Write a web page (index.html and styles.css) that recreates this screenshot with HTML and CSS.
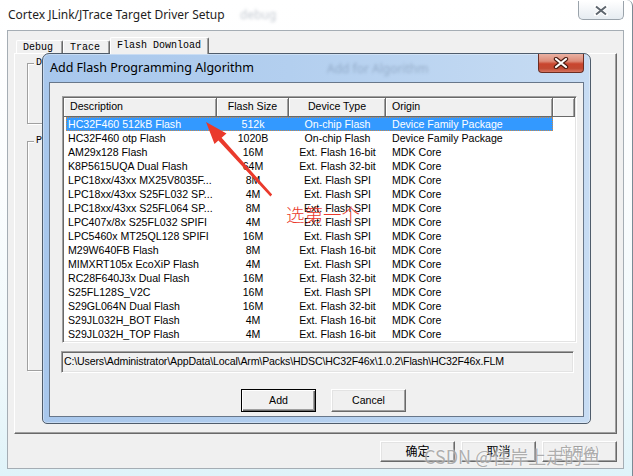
FILE: index.html
```html
<!DOCTYPE html>
<html>
<head>
<meta charset="utf-8">
<title>Cortex JLink/JTrace Target Driver Setup</title>
<link rel="stylesheet" href="styles.css">
</head>
<body>
<div class="win">
  <div class="titlebar">
    <span class="title">Cortex JLink/JTrace Target Driver Setup</span>
    <span class="ghost ghost-outer">debug</span>
    <div class="close">
      <svg width="14" height="11" viewBox="0 0 14 11"><path d="M2 1.5 L12 9.5 M12 1.5 L2 9.5" stroke="#ffffff" stroke-width="4" stroke-linecap="round"/><path d="M2 1.5 L12 9.5 M12 1.5 L2 9.5" stroke="#5d656d" stroke-width="2"/></svg>
    </div>
  </div>
  <div class="client">
    <div class="tabs">
      <div class="tab">Debug</div>
      <div class="tab">Trace</div>
      <div class="tab sel">Flash Download</div>
    </div>
    <div class="page">
      <div class="grp g1"><span class="legend">Download Function</span></div>
      <div class="grp g2"><span class="legend">Programming Algorithm</span></div>
    </div>
    <div class="footer">
      <div class="btn">确定</div>
      <div class="btn">取消</div>
      <div class="btn dis">应用(A)</div>
    </div>
  </div>
</div>

<div class="dlg">
  <div class="dlg-title">
    <span class="dtitle">Add Flash Programming Algorithm</span>
    <span class="ghost ghost-dlg">Add for Algorithm</span>
    <div class="dclose">
      <svg width="16" height="12" viewBox="0 0 16 12"><path d="M3 2 L13 10 M13 2 L3 10" stroke="#4a1b12" stroke-width="4.4" stroke-linecap="round"/><path d="M3 2 L13 10 M13 2 L3 10" stroke="#ffffff" stroke-width="2.2" stroke-linecap="round"/></svg>
    </div>
  </div>
  <div class="dlg-client">
    <div class="list">
      <div class="hdr">
        <div class="h c-desc">Description</div>
        <div class="h c-size">Flash Size</div>
        <div class="h c-dev">Device Type</div>
        <div class="h c-org">Origin</div>
        <div class="h c-fill"></div>
      </div>
      <div class="rows">
        <div class="row sel"><span class="c-desc">HC32F460 512kB Flash</span><span class="c-size">512k</span><span class="c-dev">On-chip Flash</span><span class="c-org">Device Family Package</span></div>
        <div class="row"><span class="c-desc">HC32F460 otp Flash</span><span class="c-size">1020B</span><span class="c-dev">On-chip Flash</span><span class="c-org">Device Family Package</span></div>
        <div class="row"><span class="c-desc">AM29x128 Flash</span><span class="c-size">16M</span><span class="c-dev">Ext. Flash 16-bit</span><span class="c-org">MDK Core</span></div>
        <div class="row"><span class="c-desc">K8P5615UQA Dual Flash</span><span class="c-size">64M</span><span class="c-dev">Ext. Flash 32-bit</span><span class="c-org">MDK Core</span></div>
        <div class="row"><span class="c-desc">LPC18xx/43xx MX25V8035F...</span><span class="c-size">8M</span><span class="c-dev">Ext. Flash SPI</span><span class="c-org">MDK Core</span></div>
        <div class="row"><span class="c-desc">LPC18xx/43xx S25FL032 SP...</span><span class="c-size">4M</span><span class="c-dev">Ext. Flash SPI</span><span class="c-org">MDK Core</span></div>
        <div class="row"><span class="c-desc">LPC18xx/43xx S25FL064 SP...</span><span class="c-size">8M</span><span class="c-dev">Ext. Flash SPI</span><span class="c-org">MDK Core</span></div>
        <div class="row"><span class="c-desc">LPC407x/8x S25FL032 SPIFI</span><span class="c-size">4M</span><span class="c-dev">Ext. Flash SPI</span><span class="c-org">MDK Core</span></div>
        <div class="row"><span class="c-desc">LPC5460x MT25QL128 SPIFI</span><span class="c-size">16M</span><span class="c-dev">Ext. Flash SPI</span><span class="c-org">MDK Core</span></div>
        <div class="row"><span class="c-desc">M29W640FB Flash</span><span class="c-size">8M</span><span class="c-dev">Ext. Flash 16-bit</span><span class="c-org">MDK Core</span></div>
        <div class="row"><span class="c-desc">MIMXRT105x EcoXiP Flash</span><span class="c-size">4M</span><span class="c-dev">Ext. Flash SPI</span><span class="c-org">MDK Core</span></div>
        <div class="row"><span class="c-desc">RC28F640J3x Dual Flash</span><span class="c-size">16M</span><span class="c-dev">Ext. Flash 32-bit</span><span class="c-org">MDK Core</span></div>
        <div class="row"><span class="c-desc">S25FL128S_V2C</span><span class="c-size">16M</span><span class="c-dev">Ext. Flash SPI</span><span class="c-org">MDK Core</span></div>
        <div class="row"><span class="c-desc">S29GL064N Dual Flash</span><span class="c-size">16M</span><span class="c-dev">Ext. Flash 32-bit</span><span class="c-org">MDK Core</span></div>
        <div class="row"><span class="c-desc">S29JL032H_BOT Flash</span><span class="c-size">4M</span><span class="c-dev">Ext. Flash 16-bit</span><span class="c-org">MDK Core</span></div>
        <div class="row"><span class="c-desc">S29JL032H_TOP Flash</span><span class="c-size">4M</span><span class="c-dev">Ext. Flash 16-bit</span><span class="c-org">MDK Core</span></div>
      </div>
    </div>
    <div class="path">C:\Users\Administrator\AppData\Local\Arm\Packs\HDSC\HC32F46x\1.0.2\Flash\HC32F46x.FLM</div>
    <div class="dbtns">
      <div class="btn def">Add</div>
      <div class="btn">Cancel</div>
    </div>
  </div>
</div>

<svg class="arrow" width="633" height="476" viewBox="0 0 633 476">
  <polygon points="206,122 226.5,133.5 221.6,137.8 272.2,194.6 270.4,196.4 218.4,140.6 214.5,144" fill="#ea3a2c"/>
</svg>
<div class="note">选第一个</div>
<div class="wm">CSDN @住岸上走的鱼</div>
</body>
</html>
```

FILE: styles.css
```css
* { box-sizing: border-box; }

html, body {
  margin: 0;
  padding: 0;
}

body {
  width: 633px;
  height: 476px;
  overflow: hidden;
  position: relative;
  font-family: "Liberation Sans", Arial, sans-serif;
  font-size: 10.6px;
  color: #000;
  background: #ffffff;
}

/* ---------- outer window ---------- */
.win {
  height: 476px;
  display: flex;
  flex-direction: column;
  padding: 0 8px 7px 7px;
  background: linear-gradient(to bottom, #ffffff 0%, #fbfdfe 40%, #eef8fb 80%, #dff3f9 100%);
  border-right: 1px solid #7b8a94;
  border-top-right-radius: 6px;
}

.titlebar {
  height: 30px;
  flex: none;
  display: flex;
  align-items: flex-start;
  position: relative;
}

.title {
  font-family: "Noto Sans", "Open Sans", sans-serif;
  font-size: 12px;
  color: #1e1e1e;
  margin-left: 1px;
  margin-top: 6px;
  line-height: 18px;
}

.ghost {
  position: absolute;
  color: rgba(40, 60, 90, 0.28);
  filter: blur(1.4px);
  font-family: "Noto Sans", sans-serif;
  font-size: 12px;
}

.ghost-outer {
  left: 233px;
  top: 6px;
}

.close {
  margin-left: auto;
  margin-top: 1px;
  width: 46px;
  height: 19px;
  border: 1px solid #9aa3ab;
  border-top: none;
  border-radius: 0 0 5px 5px;
  background: linear-gradient(to bottom, #ffffff, #f1f4f7 55%, #e6ecf1);
  display: flex;
  align-items: center;
  justify-content: center;
}

.client {
  flex: 1;
  display: flex;
  flex-direction: column;
  background: #f0f0f0;
  border: 1px solid #a5adb4;
  font-family: "Liberation Mono", monospace;
}

/* ---------- tabs ---------- */
.tabs {
  height: 22px;
  flex: none;
  display: flex;
  align-items: flex-end;
  padding-left: 8px;
}

.tab {
  height: 13px;
  padding: 0 6px;
  font-size: 10px;
  line-height: 14px;
  border-top: 1px solid #ffffff;
  border-left: 1px solid #ffffff;
  border-right: 1px solid #696969;
  border-radius: 2px 2px 0 0;
  box-shadow: inset -1px 0 0 #a0a0a0;
  background: #f0f0f0;
  width: 47px;
}

.tab.sel {
  width: 99px;
  height: 17px;
  margin-bottom: -1px;
  position: relative;
  z-index: 1;
  line-height: 15px;
}

.page {
  height: 381px;
  flex: none;
  margin: 0 6px;
  border-top: 1px solid #ffffff;
  border-left: 1px solid #ffffff;
  border-right: 1px solid #696969;
  border-bottom: 1px solid #696969;
  box-shadow: inset -1px -1px 0 #a0a0a0;
  padding: 9px 0 0 12px;
  display: flex;
  flex-direction: column;
}

.grp {
  width: 540px;
  border: 1px solid #a0a0a0;
  box-shadow: 1px 1px 0 #ffffff, inset 1px 1px 0 #ffffff;
  position: relative;
}

.g1 { height: 61px; }
.g2 { height: 230px; margin-top: 17px; }

.legend {
  position: absolute;
  left: 6px;
  top: -7px;
  padding: 0 2px;
  background: #f0f0f0;
  font-size: 10px;
  line-height: 12px;
}

.footer {
  margin-top: 7px;
  height: 21px;
  display: flex;
  justify-content: flex-end;
  gap: 6px;
  padding-right: 6px;
}

/* ---------- buttons ---------- */
.btn {
  width: 75px;
  height: 21px;
  background: #f0f0f0;
  border: 1px solid;
  border-color: #ffffff #696969 #696969 #ffffff;
  box-shadow: inset -1px -1px 0 #a0a0a0, inset 1px 1px 0 #e3e3e3;
  font-family: "Noto Sans CJK SC", "Liberation Sans", sans-serif;
  font-size: 12px;
  line-height: 18px;
  text-align: center;
  color: #000;
}

.btn.dis {
  color: #a0a0a0;
  text-shadow: 1px 1px 0 #ffffff;
}

/* ---------- dialog ---------- */
.dlg {
  position: absolute;
  left: 42px;
  top: 53px;
  width: 549px;
  height: 371px;
  border: 1px solid #4f5c6b;
  border-radius: 7px 7px 5px 5px;
  background: linear-gradient(to right, #a8c7ec 0%, #b3cfef 45%, #c7dcf3 100%);
  box-shadow: inset 0 0 0 1px rgba(255, 255, 255, 0.35);
  padding: 0 6px 6px 6px;
  display: flex;
  flex-direction: column;
}

.dlg-title {
  height: 28px;
  flex: none;
  display: flex;
  align-items: flex-start;
  position: relative;
}

.dtitle {
  font-family: "Noto Sans", "Open Sans", sans-serif;
  font-size: 12.5px;
  line-height: 18px;
  margin-top: 5px;
  margin-left: 1px;
  color: #000;
}

.ghost-dlg {
  left: 278px;
  top: 6px;
  color: rgba(30, 50, 80, 0.25);
}

.dclose {
  margin-left: auto;
  width: 46px;
  height: 19px;
  border: 1px solid #6b2d22;
  border-top: none;
  border-radius: 0 0 4px 4px;
  background: linear-gradient(to bottom, #e9b1a3 0%, #dd8b78 40%, #c9452e 55%, #c24a33 80%, #d77560 100%);
  display: flex;
  align-items: center;
  justify-content: center;
}

.dlg-client {
  flex: 1;
  background: #f0f0f0;
  border: 1px solid #68778a;
  display: flex;
  flex-direction: column;
}

/* list view */
.list {
  margin: 13px 6px 0 12px;
  height: 247px;
  flex: none;
  background: #ffffff;
  border: 1px solid;
  border-color: #a0a0a0 #ffffff #ffffff #a0a0a0;
  box-shadow: inset 1px 1px 0 #696969, inset -1px -1px 0 #e3e3e3;
  padding: 1px 1px 1px 1px;
  display: flex;
  flex-direction: column;
}

.hdr {
  height: 19px;
  flex: none;
  display: flex;
  background: #f0f0f0;
  border-bottom: 1px solid #696969;
}

.h {
  height: 18px;
  line-height: 17px;
  border-right: 1px solid #696969;
  box-shadow: inset 1px 1px 0 #ffffff, inset -1px 0 0 #a0a0a0;
  font-size: 10.6px;
  white-space: nowrap;
}

.hdr .c-desc { width: 153px; padding-left: 6px; }
.hdr .c-size { width: 72px; text-align: center; }
.hdr .c-dev { width: 97px; text-align: center; }
.hdr .c-org { width: 167px; padding-left: 6px; }
.hdr .c-fill { flex: 1; }

.rows {
  display: flex;
  flex-direction: column;
}

.row {
  height: 14px;
  line-height: 14px;
  display: flex;
  margin-left: 2px;
  width: 487px;
  white-space: nowrap;
}

.row.sel {
  background: #3399ff;
  color: #ffffff;
  outline: 1px dotted #c9894a;
  outline-offset: -1px;
}

.row .c-desc { width: 151px; padding-left: 2px; overflow: hidden; }
.row .c-size { width: 72px; text-align: center; }
.row .c-dev { width: 97px; text-align: center; }
.row .c-org { width: 167px; padding-left: 6px; }

/* path edit */
.path {
  margin: 8px 9px 0 11px;
  height: 22px;
  flex: none;
  border: 1px solid;
  border-color: #a0a0a0 #ffffff #ffffff #a0a0a0;
  box-shadow: inset 1px 1px 0 #696969, inset -1px -1px 0 #e3e3e3;
  padding-left: 2px;
  line-height: 19px;
  white-space: nowrap;
  overflow: hidden;
  letter-spacing: -0.15px;
}

.dbtns {
  margin-top: 16px;
  display: flex;
  gap: 15px;
  padding-left: 191px;
}

.dbtns .btn {
  height: 23px;
  font-family: "Liberation Sans", sans-serif;
  font-size: 10.6px;
  line-height: 20px;
}

.btn.def {
  border: 1px solid #000000;
  box-shadow: inset 1px 1px 0 #ffffff, inset -1px -1px 0 #696969, inset -2px -2px 0 #a0a0a0;
}

/* ---------- annotations ---------- */
.arrow {
  position: absolute;
  left: 0;
  top: 0;
  pointer-events: none;
}

.note {
  position: absolute;
  left: 286px;
  top: 202px;
  font-family: "Noto Sans CJK SC", sans-serif;
  font-weight: 300;
  font-size: 18.5px;
  line-height: 24px;
  color: #ea3a2c;
}

.wm {
  position: absolute;
  left: 424px;
  top: 445px;
  font-family: "Noto Sans CJK SC", "Liberation Sans", sans-serif;
  font-size: 18px;
  line-height: 22px;
  color: rgba(150, 150, 150, 0.75);
  text-shadow: 0 0 2px rgba(255, 255, 255, 0.9);
  white-space: nowrap;
}
```
